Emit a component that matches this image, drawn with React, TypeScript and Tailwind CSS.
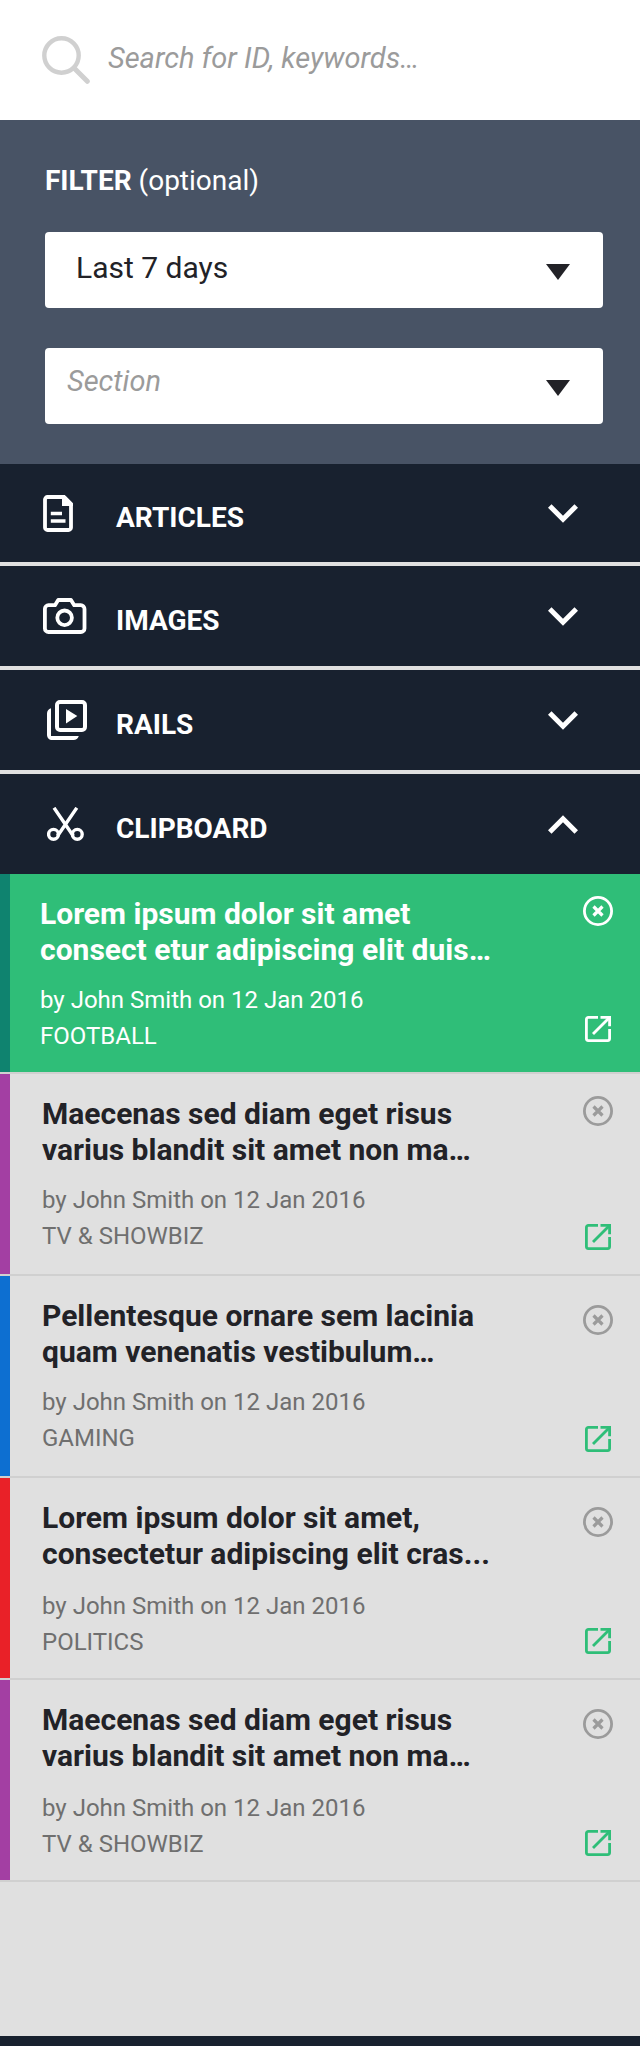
import { useState } from 'react';
import type { ReactNode } from 'react';

function SearchIcon() {
  return (
    <svg className="h-12 w-12 shrink-0" viewBox="0 0 48 48" fill="none" stroke="#d0d0d0" aria-hidden="true">
      <circle cx="19.5" cy="19.5" r="17.2" strokeWidth="4.4" />
      <path d="M32.5 32.5 45.3 45.3" strokeWidth="5" strokeLinecap="round" />
    </svg>
  );
}

function DocumentIcon() {
  return (
    <svg className="h-[37px] w-[30px]" viewBox="0 0 30 37" fill="none" aria-hidden="true">
      <path d="M21 2H4.5A2.5 2.5 0 0 0 2 4.5v28A2.5 2.5 0 0 0 4.5 35h21a2.5 2.5 0 0 0 2.5-2.5V9Z" stroke="#fff" strokeWidth="3.8" />
      <path d="M19 1h3.5L30 8.5V11H19Z" fill="#fff" />
      <path d="M7.8 18.5H19M7.8 26H22.5" stroke="#fff" strokeWidth="3.4" />
    </svg>
  );
}

function CameraIcon() {
  return (
    <svg className="h-9 w-11" viewBox="0 0 44 36" fill="none" stroke="#fff" strokeWidth="3.8" strokeLinejoin="round" aria-hidden="true">
      <path d="M5.5 7.2H12L15.2 2H28l3.2 5.2h6.5A3.7 3.7 0 0 1 41.5 11v19.4A3.6 3.6 0 0 1 37.900 34H5.5A3.6 3.6 0 0 1 1.9 30.4V10.8A3.6 3.6 0 0 1 5.5 7.2Z" />
      <circle cx="21.6" cy="19.8" r="7.3" />
    </svg>
  );
}

function RailsIcon() {
  return (
    <svg className="h-10 w-10" viewBox="0 0 40 40" fill="none" aria-hidden="true">
      <rect x="10" y="2" width="28" height="28" rx="3" stroke="#fff" strokeWidth="4" />
      <path d="M19 9v14.5L30.3 16Z" fill="#fff" />
      <path d="M4 8.2C1.5 9 0 11 0 13.5V34.5C0 38 2 40 5.5 40H26.5C29 40 31 38.5 31.8 36H4Z" fill="#fff" />
    </svg>
  );
}

function ScissorsIcon() {
  return (
    <svg className="h-[34px] w-[37px]" viewBox="0 0 37 34" fill="none" stroke="#fff" strokeWidth="3.4" aria-hidden="true">
      <circle cx="6.5" cy="27.3" r="4.9" />
      <circle cx="30.3" cy="27.3" r="4.9" />
      <path d="M7 .8 26.3 29M29.8 .8 10.5 29" />
    </svg>
  );
}

function Chevron({ up }: { up: boolean }) {
  return (
    <svg className="h-[19px] w-[30px]" viewBox="6 8.5 12 7.6" fill="#fff" aria-hidden="true">
      <path d={up ? 'M12 8.59l-6 6L7.41 16 12 11.42 16.59 16 18 14.59z' : 'M16.59 8.59L12 13.17 7.41 8.59 6 10l6 6 6-6z'} />
    </svg>
  );
}

function RemoveIcon() {
  return (
    <svg className="h-[30px] w-[30px]" viewBox="0 0 30 30" fill="none" stroke="currentColor" aria-hidden="true">
      <circle cx="15" cy="15" r="13.6" strokeWidth="2.8" />
      <path d="M10.5 10.5l9 9M19.5 10.5l-9 9" strokeWidth="3.2" />
    </svg>
  );
}

function OpenIcon() {
  return (
    <svg className="h-[26px] w-[26px]" viewBox="0 0 26 26" fill="none" stroke="currentColor" strokeWidth="2.8" aria-hidden="true">
      <path d="M13 1.4H3.4a2 2 0 0 0-2 2v19.2a2 2 0 0 0 2 2h19.2a2 2 0 0 0 2-2V13" />
      <path d="M15.5 1.4h9.1v8.8" />
      <path d="M8 18 24 2" />
    </svg>
  );
}

type FilterSelectProps = {
  label: string;
  options: string[];
  placeholder?: boolean;
};

function FilterSelect({ label, options, placeholder }: FilterSelectProps) {
  const tone = placeholder
    ? 'pl-[22px] pb-2 text-[29px] italic text-[#9b9b9b]'
    : 'pl-[31px] pb-1.5 text-[30px] text-[#222227]';
  return (
    <div className="relative">
      <select
        aria-label={label}
        className={`h-[76px] w-full appearance-none rounded bg-white pr-20 ${tone}`}
      >
        {options.map((option) => (
          <option key={option}>{option}</option>
        ))}
      </select>
      <svg
        className="pointer-events-none absolute top-8 right-[33px] h-4 w-6"
        viewBox="0 0 24 16"
        preserveAspectRatio="none"
        fill="#222227"
        aria-hidden="true"
      >
        <path d="M0 0h24L12 16z" />
      </svg>
    </div>
  );
}

type SectionHeaderProps = {
  title: string;
  icon: ReactNode;
  open: boolean;
  first?: boolean;
  onToggle: () => void;
};

function SectionHeader({ title, icon, open, first, onToggle }: SectionHeaderProps) {
  return (
    <h2 className={first ? '' : 'border-t-4 border-[#e0e0e0]'}>
      <button
        type="button"
        aria-expanded={open}
        onClick={onToggle}
        className={`flex w-full items-center bg-[#18212f] pr-[62px] pl-[43px] text-left text-white ${first ? 'h-[98px]' : 'h-[100px]'}`}
      >
        <span className="flex w-[73px] shrink-0">{icon}</span>
        <span className="flex-1 pt-2.5 text-[28px] leading-9 font-bold">{title}</span>
        <Chevron up={open} />
      </button>
    </h2>
  );
}

type Clip = {
  title: string;
  category: string;
  bar: string;
  selected?: boolean;
  loose?: boolean;
  lowClose?: boolean;
};

const clips: Clip[] = [
  { title: 'Lorem ipsum dolor sit amet consect etur adipiscing elit duis…', category: 'FOOTBALL', bar: 'bg-[#0f836f]', selected: true },
  { title: 'Maecenas sed diam eget risus varius blandit sit amet non ma…', category: 'TV & SHOWBIZ', bar: 'bg-[#a33fa3]' },
  { title: 'Pellentesque ornare sem lacinia quam venenatis vestibulum…', category: 'GAMING', bar: 'bg-[#0d6fd1]', lowClose: true },
  { title: 'Lorem ipsum dolor sit amet, consectetur adipiscing elit cras...', category: 'POLITICS', bar: 'bg-[#e92128]', loose: true, lowClose: true },
  { title: 'Maecenas sed diam eget risus varius blandit sit amet non ma…', category: 'TV & SHOWBIZ', bar: 'bg-[#a33fa3]', loose: true, lowClose: true },
];

function ClipItem({ clip }: { clip: Clip }) {
  const { selected, loose, lowClose } = clip;
  return (
    <li className="border-b-2 border-[#d0d0d0]">
      <article className={`flex ${selected ? 'min-h-[198px] bg-[#2fbe78]' : 'min-h-[200px]'}`}>
        <div className={`w-2.5 shrink-0 ${clip.bar}`} />
        <div className={`flex-1 pt-[22px] ${selected ? 'pl-[30px] text-white' : 'pl-8 text-[#6f6f6f]'}`}>
          <h3 className={`max-w-[465px] text-[30px] leading-9 font-bold ${selected ? '' : 'text-[#222227]'}`}>{clip.title}</h3>
          <p className={`text-[24px] leading-9 ${loose ? 'mt-4' : 'mt-3.5'}`}>by John Smith on 12 Jan 2016</p>
          <p className="text-[24px] leading-9">{clip.category}</p>
        </div>
        <div className={`flex shrink-0 flex-col items-center justify-between pr-[27px] ${selected ? 'pb-[30px]' : 'pb-6'} ${lowClose ? 'pt-[29px]' : 'pt-[22px]'}`}>
          <button type="button" aria-label="Remove from clipboard" className={selected ? 'text-white' : 'text-[#9b9b9b]'}>
            <RemoveIcon />
          </button>
          <a href="#open" aria-label={`Open ${clip.title}`} className={selected ? 'text-white' : 'text-[#2fbe78]'}>
            <OpenIcon />
          </a>
        </div>
      </article>
    </li>
  );
}

export default function App() {
  const [openSection, setOpenSection] = useState('CLIPBOARD');
  const toggle = (name: string) => setOpenSection(openSection === name ? '' : name);

  return (
    <main className="flex min-h-screen flex-col bg-[#e0e0e0] font-['Roboto',sans-serif]">
      <form className="flex h-[120px] items-center gap-[18px] bg-white px-[42px]" role="search">
        <SearchIcon />
        <input
          aria-label="Search"
          type="search"
          placeholder="Search for ID, keywords…"
          className="min-w-0 flex-1 pb-1 text-[29px] leading-9 italic outline-none placeholder:text-[#9b9b9b] placeholder:opacity-100"
        />
      </form>

      <section className="flex flex-col bg-[#485365] pt-[43px] pr-[37px] pb-10 pl-[45px]">
        <h2 className="mb-[33px] text-[28px] leading-9 text-white">
          <strong className="font-bold">FILTER</strong> (optional)
        </h2>
        <div className="flex flex-col gap-10">
          <FilterSelect label="Period" options={['Last 7 days', 'Last 30 days']} />
          <FilterSelect label="Section" options={['Section', 'Football', 'Gaming', 'Politics']} placeholder />
        </div>
      </section>

      <SectionHeader title="ARTICLES" icon={<DocumentIcon />} open={openSection === 'ARTICLES'} onToggle={() => toggle('ARTICLES')} first />
      <SectionHeader title="IMAGES" icon={<CameraIcon />} open={openSection === 'IMAGES'} onToggle={() => toggle('IMAGES')} />
      <SectionHeader title="RAILS" icon={<span className="pl-1"><RailsIcon /></span>} open={openSection === 'RAILS'} onToggle={() => toggle('RAILS')} />
      <SectionHeader title="CLIPBOARD" icon={<span className="pl-1"><ScissorsIcon /></span>} open={openSection === 'CLIPBOARD'} onToggle={() => toggle('CLIPBOARD')} />

      {openSection === 'CLIPBOARD' && (
        <ul>
          {clips.map((clip, index) => (
            <ClipItem key={index} clip={clip} />
          ))}
        </ul>
      )}

      <footer className="mt-auto h-2.5 bg-[#18212f]" />
    </main>
  );
}
